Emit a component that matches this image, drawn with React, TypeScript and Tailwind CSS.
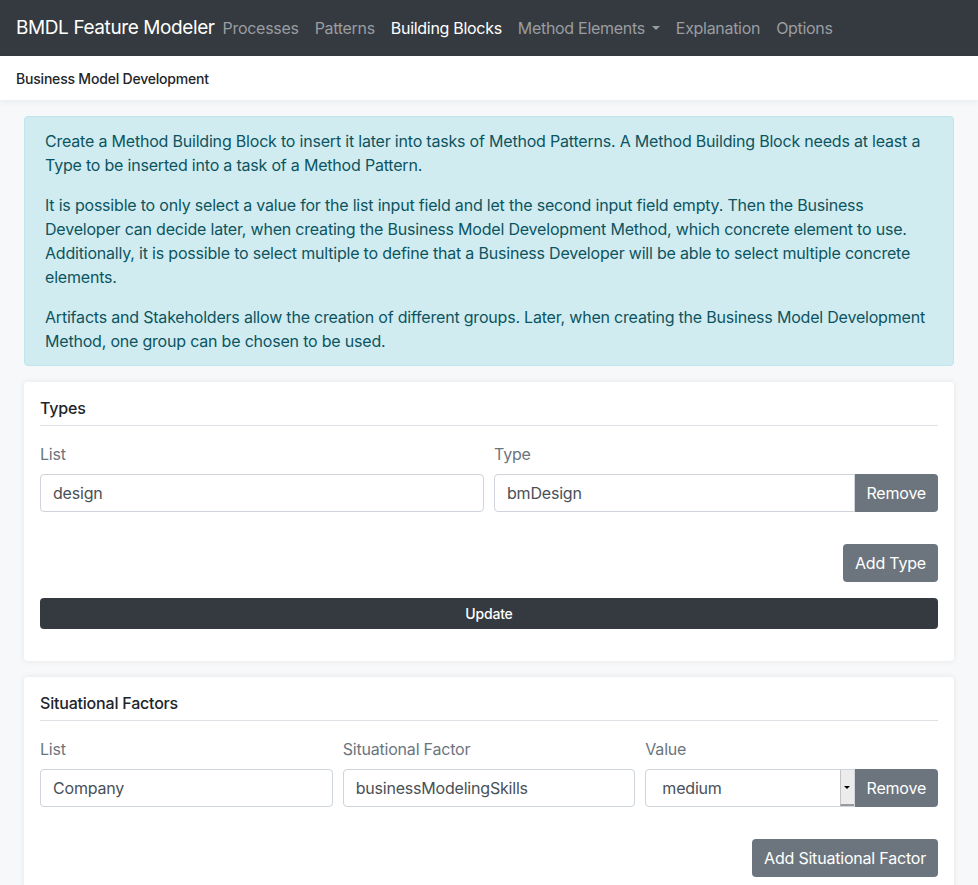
const navLinks = [
  { label: "Processes", active: false },
  { label: "Patterns", active: false },
  { label: "Building Blocks", active: true },
  { label: "Method Elements", active: false, dropdown: true },
  { label: "Explanation", active: false },
  { label: "Options", active: false },
];

const inputCls =
  "h-[38px] w-full rounded-[4px] border border-[#ced4da] bg-white px-3 text-base text-[#495057] outline-none";
const btnCls = "h-[38px] rounded-[4px] bg-[#6c757d] px-3 text-base text-white";

function Field({ label, children }: { label: string; children: React.ReactNode }) {
  return (
    <div className="flex min-w-0 flex-1 flex-col">
      <label className="mb-2 leading-6 text-[#6c757d]">{label}</label>
      {children}
    </div>
  );
}

function RemoveBtn() {
  return <button className="h-[38px] shrink-0 rounded-r-[4px] bg-[#6c757d] px-3 text-base text-white">Remove</button>;
}

function Card({ title, children }: { title: string; children: React.ReactNode }) {
  return (
    <div className="rounded-[4px] bg-white px-4 pt-4 pb-8 shadow-[0_0_6px_rgba(0,0,0,0.08)]">
      <div className="border-b border-[#dee2e6] pb-[7px] font-medium leading-5 text-[#212529]">{title}</div>
      {children}
    </div>
  );
}

export default function App() {
  return (
    <div className="min-h-[885px] bg-[#f7f8fa] font-['Inter',sans-serif] tracking-[-0.2px] text-[#212529]">
      <nav className="flex h-14 items-center bg-[#343a40] px-4">
        <span className="text-[19px] tracking-[-0.4px] text-white">BMDL Feature Modeler</span>
        <ul className="flex tracking-[-0.3px]">
          {navLinks.map((l) => (
            <li key={l.label} className={`flex items-center px-2 ${l.active ? "text-white" : "text-[#9a9da0]"}`}>
              {l.label}
              {l.dropdown && <span className="ml-[7px] h-0 w-0 border-x-[4px] border-t-[4px] border-x-transparent border-t-[#9a9da0]" />}
            </li>
          ))}
        </ul>
      </nav>
      <div className="flex h-11 items-center bg-white px-4 pt-[2px] text-sm font-medium shadow-[0_2px_6px_rgba(0,0,0,0.06)]">
        Business Model Development
      </div>

      <div className="flex flex-col gap-4 px-6 pt-4">
        <div className="space-y-4 rounded-[4px] border border-[#bee5eb] bg-[#d1ecf1] px-5 py-3 leading-6 text-[#0c5460]">
          <p>
            Create a Method Building Block to insert it later into tasks of Method Patterns. A Method Building Block needs at least a Type to be inserted into a task of a Method Pattern.
          </p>
          <p>
            It is possible to only select a value for the list input field and let the second input field empty. Then the Business Developer can decide later, when creating the Business Model Development Method, which concrete element to use. Additionally, it is possible to select multiple to define that a Business Developer will be able to select multiple concrete elements.
          </p>
          <p>
            Artifacts and Stakeholders allow the creation of different groups. Later, when creating the Business Model Development Method, one group can be chosen to be used.
          </p>
        </div>

        <Card title="Types">
          <div className="mt-4 flex gap-[10px]">
            <Field label="List">
              <input className={inputCls} defaultValue="design" />
            </Field>
            <Field label="Type">
              <div className="flex">
                <input className={`${inputCls} rounded-r-none`} defaultValue="bmDesign" />
                <RemoveBtn />
              </div>
            </Field>
          </div>
          <div className="mt-8 flex justify-end">
            <button className={btnCls}>Add Type</button>
          </div>
          <button className="mt-4 h-[31px] w-full rounded-[4px] bg-[#343a40] text-sm font-medium text-white">Update</button>
        </Card>

        <Card title="Situational Factors">
          <div className="mt-4 flex gap-[10px]">
            <Field label="List">
              <input className={inputCls} defaultValue="Company" />
            </Field>
            <Field label="Situational Factor">
              <input className={inputCls} defaultValue="businessModelingSkills" />
            </Field>
            <Field label="Value">
              <div className="flex">
                <div className="flex h-[38px] min-w-0 flex-1 items-center rounded-l-[4px] border border-[#ced4da] bg-white pl-4 text-[#495057]">
                  <span className="flex-1">medium</span>
                  <span className="flex h-full w-[14px] items-center justify-center border-l border-[#c4c4c4] border-b-2 border-b-[#9a9a9a] bg-[#ececec]">
                    <span className="h-0 w-0 border-x-[3px] border-t-[3px] border-x-transparent border-t-black" />
                  </span>
                </div>
                <RemoveBtn />
              </div>
            </Field>
          </div>
          <div className="mt-8 flex justify-end">
            <button className={btnCls}>Add Situational Factor</button>
          </div>
        </Card>
      </div>
    </div>
  );
}
